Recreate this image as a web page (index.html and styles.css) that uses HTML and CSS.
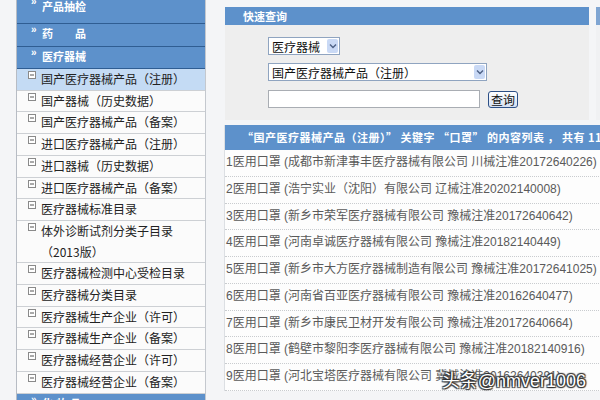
FILE: index.html
```html
<!DOCTYPE html>
<html lang="zh-CN">
<head>
<meta charset="utf-8">
<title>医疗器械查询</title>
<link rel="stylesheet" href="styles.css">
</head>
<body>
<div class="page">
  <aside class="side">
    <div class="cat first"><span class="raq">»</span><span class="cat-t">产品抽检</span></div>
    <div class="cat"><span class="raq">»</span><span class="cat-t">药　　品</span></div>
    <div class="cat"><span class="raq">»</span><span class="cat-t">医疗器械</span></div>
    <ul class="items">
      <li class="active"><svg class="ico" viewBox="0 0 8 8"><rect x="0.5" y="0.5" width="7" height="7" fill="#fff" stroke="#8a8a8a"/><path d="M2 4h4" stroke="#555"/></svg><span>国产医疗器械产品（注册）</span></li>
      <li><svg class="ico" viewBox="0 0 8 8"><rect x="0.5" y="0.5" width="7" height="7" fill="#fff" stroke="#8a8a8a"/><path d="M2 4h4" stroke="#555"/></svg><span>国产器械（历史数据）</span></li>
      <li><svg class="ico" viewBox="0 0 8 8"><rect x="0.5" y="0.5" width="7" height="7" fill="#fff" stroke="#8a8a8a"/><path d="M2 4h4" stroke="#555"/></svg><span>国产医疗器械产品（备案）</span></li>
      <li><svg class="ico" viewBox="0 0 8 8"><rect x="0.5" y="0.5" width="7" height="7" fill="#fff" stroke="#8a8a8a"/><path d="M2 4h4" stroke="#555"/></svg><span>进口医疗器械产品（注册）</span></li>
      <li><svg class="ico" viewBox="0 0 8 8"><rect x="0.5" y="0.5" width="7" height="7" fill="#fff" stroke="#8a8a8a"/><path d="M2 4h4" stroke="#555"/></svg><span>进口器械（历史数据）</span></li>
      <li><svg class="ico" viewBox="0 0 8 8"><rect x="0.5" y="0.5" width="7" height="7" fill="#fff" stroke="#8a8a8a"/><path d="M2 4h4" stroke="#555"/></svg><span>进口医疗器械产品（备案）</span></li>
      <li><svg class="ico" viewBox="0 0 8 8"><rect x="0.5" y="0.5" width="7" height="7" fill="#fff" stroke="#8a8a8a"/><path d="M2 4h4" stroke="#555"/></svg><span>医疗器械标准目录</span></li>
      <li><svg class="ico" viewBox="0 0 8 8"><rect x="0.5" y="0.5" width="7" height="7" fill="#fff" stroke="#8a8a8a"/><path d="M2 4h4" stroke="#555"/></svg><span>体外诊断试剂分类子目录<br>（2013版）</span></li>
      <li><svg class="ico" viewBox="0 0 8 8"><rect x="0.5" y="0.5" width="7" height="7" fill="#fff" stroke="#8a8a8a"/><path d="M2 4h4" stroke="#555"/></svg><span>医疗器械检测中心受检目录</span></li>
      <li><svg class="ico" viewBox="0 0 8 8"><rect x="0.5" y="0.5" width="7" height="7" fill="#fff" stroke="#8a8a8a"/><path d="M2 4h4" stroke="#555"/></svg><span>医疗器械分类目录</span></li>
      <li><svg class="ico" viewBox="0 0 8 8"><rect x="0.5" y="0.5" width="7" height="7" fill="#fff" stroke="#8a8a8a"/><path d="M2 4h4" stroke="#555"/></svg><span>医疗器械生产企业（许可）</span></li>
      <li><svg class="ico" viewBox="0 0 8 8"><rect x="0.5" y="0.5" width="7" height="7" fill="#fff" stroke="#8a8a8a"/><path d="M2 4h4" stroke="#555"/></svg><span>医疗器械生产企业（备案）</span></li>
      <li><svg class="ico" viewBox="0 0 8 8"><rect x="0.5" y="0.5" width="7" height="7" fill="#fff" stroke="#8a8a8a"/><path d="M2 4h4" stroke="#555"/></svg><span>医疗器械经营企业（许可）</span></li>
      <li><svg class="ico" viewBox="0 0 8 8"><rect x="0.5" y="0.5" width="7" height="7" fill="#fff" stroke="#8a8a8a"/><path d="M2 4h4" stroke="#555"/></svg><span>医疗器械经营企业（备案）</span></li>
    </ul>
    <div class="cat"><span class="raq">»</span><span class="cat-t">化 妆 品</span></div>
  </aside>

  <main class="main">
    <div class="toprow">
      <section class="quick">
        <div class="bar">快速查询</div>
        <div class="qbody">
          <div class="sel s1"><span>医疗器械</span><span class="arr"><svg viewBox="0 0 8 6" width="8" height="6"><path d="M1 1.5l3 3 3-3" fill="none" stroke="#4d6185" stroke-width="1.4"/></svg></span></div>
          <div class="sel s2"><span>国产医疗器械产品（注册）</span><span class="arr"><svg viewBox="0 0 8 6" width="8" height="6"><path d="M1 1.5l3 3 3-3" fill="none" stroke="#4d6185" stroke-width="1.4"/></svg></span></div>
          <div class="qrow"><div class="inp"></div><div class="btn">查询</div></div>
        </div>
      </section>
      <section class="other">
        <div class="bar"></div>
        <div class="obody"></div>
      </section>
    </div>

    <section class="results">
      <div class="rbar">“国产医疗器械产品（注册）” 关键字 “口罩” 的内容列表 ， 共有 117 条记录</div>
      <ul class="rows">
        <li>1医用口罩 (成都市新津事丰医疗器械有限公司 川械注准20172640226)</li>
        <li>2医用口罩 (浩宁实业（沈阳）有限公司 辽械注准20202140008)</li>
        <li>3医用口罩 (新乡市荣军医疗器械有限公司 豫械注准20172640642)</li>
        <li>4医用口罩 (河南卓诚医疗器械有限公司 豫械注准20182140449)</li>
        <li>5医用口罩 (新乡市大方医疗器械制造有限公司 豫械注准20172641025)</li>
        <li>6医用口罩 (河南省百亚医疗器械有限公司 豫械注准20162640477)</li>
        <li>7医用口罩 (新乡市康民卫材开发有限公司 豫械注准20172640664)</li>
        <li>8医用口罩 (鹤壁市黎阳李医疗器械有限公司 豫械注准20182140916)</li>
        <li>9医用口罩 (河北宝塔医疗器械有限公司 冀械注准20162640391)</li>
      </ul>
    </section>
  </main>

  <div class="wm">头条@nmver1006</div>
</div>
</body>
</html>
```

FILE: styles.css
```css
html, body {
  margin: 0;
  padding: 0;
  width: 600px;
  height: 400px;
  overflow: hidden;
  background: #f4f5f7;
  font-family: "Liberation Sans", "Noto Sans CJK SC", sans-serif;
}

.page {
  position: relative;
  display: flex;
  align-items: flex-start;
  height: 400px;
}

/* ---------- sidebar ---------- */
.side {
  flex: none;
  width: 190px;
  margin-left: 16px;
  box-sizing: border-box;
  border-left: 1px solid #b7bcc4;
  border-right: 1px solid #c4c8ce;
  background: #fafafa;
}

.cat {
  display: flex;
  height: 21.5px;
  padding-left: 14px;
  background: #5d91cb;
  border-bottom: 1px solid #2f5d92;
  color: #fff;
  font-weight: bold;
  font-size: 11px;
  overflow: hidden;
}
.cat.first {
  height: 23px;
}
.raq {
  width: 11px;
  font-size: 10px;
  line-height: 9px;
  margin-top: 1px;
}
.cat-t {
  margin-top: 4px;
  line-height: 13px;
}
.cat.first .raq { margin-top: -3px; }
.cat.first .cat-t { margin-top: 1px; }

.items {
  list-style: none;
  margin: 0;
  padding: 0;
}
.items li {
  display: flex;
  align-items: flex-start;
  padding-left: 11px;
  border-bottom: 1px solid #cdd0d4;
  background: #fbfbfb;
  color: #222;
  font-size: 12px;
  line-height: 20.7px;
  font-family: "Noto Sans CJK SC", sans-serif;
}
.items li.active {
  background: #c4dbf4;
}
.ico {
  flex: none;
  width: 8px;
  height: 8px;
  margin-top: 2px;
  margin-right: 5px;
}

/* ---------- main ---------- */
.main {
  flex: none;
  width: 400px;
  margin-left: 19px;
}

.toprow {
  display: flex;
  gap: 7px;
  margin-top: 7px;
}
.quick {
  flex: none;
  width: 364px;
}
.bar {
  height: 18px;
  line-height: 18px;
  padding-left: 18px;
  background: #5d91cb;
  color: #fff;
  font-weight: bold;
  font-size: 11px;
  font-family: "Noto Sans CJK SC", sans-serif;
}
.qbody {
  box-sizing: border-box;
  height: 95px;
  padding: 12px 0 0 43px;
  background: #eeeeee;
  display: flex;
  flex-direction: column;
  gap: 8px;
}

.sel {
  display: flex;
  align-items: center;
  justify-content: space-between;
  box-sizing: border-box;
  height: 18px;
  padding-left: 3px;
  border: 1px solid #8fa4c0;
  background: #fff;
  color: #111;
  font-size: 12px;
  font-family: "Noto Sans CJK SC", sans-serif;
}
.s1 { width: 72px; }
.s2 { width: 219px; }
.arr {
  display: flex;
  align-items: center;
  justify-content: center;
  width: 11px;
  height: 14px;
  margin-right: 1px;
  border-radius: 2px;
  background: #c9d9f5;
}

.qrow {
  display: flex;
  align-items: center;
  gap: 8px;
  margin-top: 1px;
}
.inp {
  box-sizing: border-box;
  width: 212px;
  height: 18px;
  border: 1px solid #a9adb3;
  background: #fff;
}
.btn {
  box-sizing: border-box;
  width: 30px;
  height: 17px;
  border: 1px solid #2c4f86;
  border-radius: 3px;
  background: linear-gradient(#ffffff, #d4e0f2);
  color: #111;
  font-size: 12px;
  line-height: 15px;
  text-align: center;
  font-family: "Noto Sans CJK SC", sans-serif;
}

.other {
  flex: 1;
}
.other .bar {
  background: #7fa5d2;
}
.obody {
  height: 95px;
  background: #f0f1f3;
}

/* ---------- results ---------- */
.results {
  margin-top: 5px;
  background: #fdfdfd;
  border-left: 1px solid #dcdfe3;
  margin-left: -1px;
}
.rbar {
  height: 25px;
  line-height: 25px;
  padding-left: 17px;
  background: #5d91cb;
  color: #fff;
  font-weight: bold;
  font-size: 11px;
  letter-spacing: 0.5px;
  white-space: nowrap;
  overflow: hidden;
  font-family: "Noto Sans CJK SC", sans-serif;
}
.rows {
  list-style: none;
  margin: 0;
  padding: 0;
}
.rows li {
  box-sizing: border-box;
  height: 26.75px;
  line-height: 25.75px;
  padding-left: 1px;
  border-bottom: 1px dotted #c9cccf;
  color: #5a5a5a;
  font-size: 12px;
  white-space: nowrap;
  overflow: hidden;
}

/* ---------- watermark ---------- */
.wm {
  position: absolute;
  right: 14px;
  bottom: 8px;
  color: #fff;
  font-size: 18px;
  font-family: "Liberation Sans", "Noto Sans CJK SC", sans-serif;
  text-shadow: 0 0 1px #222, 1px 1px 1px #333, -1px -1px 1px #333, 1px -1px 1px #333, -1px 1px 1px #333;
}
```
